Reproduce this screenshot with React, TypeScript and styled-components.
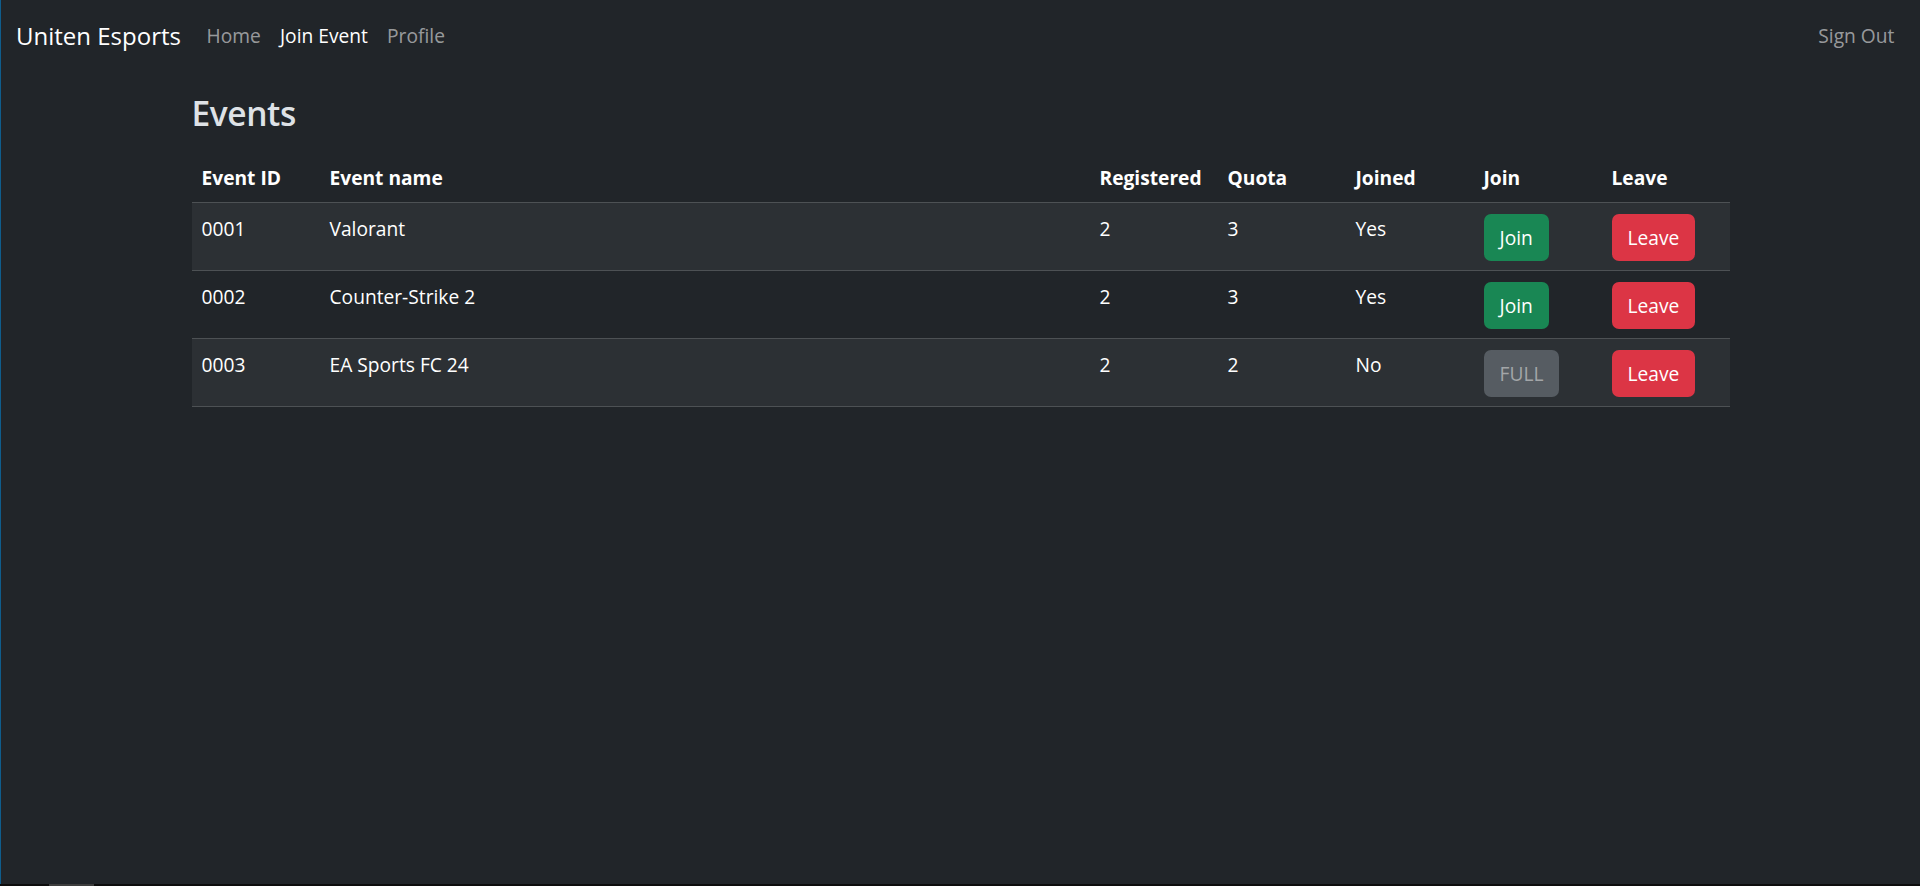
import styled, { createGlobalStyle } from "styled-components";

const GlobalStyle = createGlobalStyle`
  html, body {
    margin: 0;
    padding: 0;
    background: #212529;
  }
  body {
    font-family: "Open Sans", "Noto Sans", "Liberation Sans", sans-serif;
    color: #dee2e6;
    overflow: hidden;
  }
  * {
    box-sizing: border-box;
  }
`;

const Page = styled.div`
  min-height: 100vh;
  background: #212529;
  border-left: 1px solid #0f5d8c;
`;

const Navbar = styled.nav`
  height: 72px;
  display: flex;
  align-items: center;
  padding: 0 16px 0 15px;
`;

const Brand = styled.a`
  font-size: 24px;
  line-height: 36px;
  color: #fff;
  margin-right: 16px;
  text-decoration: none;
`;

const NavList = styled.div`
  display: flex;
  align-items: center;
  flex: 1;
`;

const NavLink = styled.a<{ $active?: boolean }>`
  font-size: 19.2px;
  line-height: 28.8px;
  padding: 0 9.6px;
  color: ${(p) => (p.$active ? "#ffffff" : "rgba(255, 255, 255, 0.55)")};
  text-decoration: none;
  cursor: pointer;
`;

const Spacer = styled.div`
  flex: 1;
`;

const Main = styled.main`
  width: 1538px;
  margin: 0 auto;
  padding-top: 18px;
`;

const Title = styled.h2`
  font-size: 33.5px;
  line-height: 46px;
  font-weight: 600;
  letter-spacing: -0.4px;
  color: #dee2e6;
  margin: 0 0 18px;
`;

const Table = styled.table`
  width: 100%;
  border-collapse: collapse;
  table-layout: fixed;
  color: #fff;
  font-size: 19.2px;
  line-height: 28.8px;
`;

const HeadCell = styled.th`
  text-align: left;
  font-weight: 700;
  padding: 9.6px 9.6px 9.6px 10px;
  border-bottom: 1px solid #4d5154;
`;

const Row = styled.tr<{ $striped?: boolean }>`
  background: ${(p) => (p.$striped ? "#2c3034" : "transparent")};
`;

const Cell = styled.td`
  vertical-align: top;
  padding: 12px 9.6px 8px 10px;
  border-bottom: 1px solid #4d5154;
  height: 68px;
`;

const ActionButton = styled.button<{ $variant: "join" | "leave" | "full" }>`
  display: inline-flex;
  align-items: center;
  justify-content: center;
  height: 47px;
  margin-top: -1px;
  padding: 0 16px;
  border-radius: 7px;
  border: none;
  font-family: inherit;
  font-size: 19.2px;
  cursor: ${(p) => (p.$variant === "full" ? "default" : "pointer")};
  color: ${(p) => (p.$variant === "full" ? "#a3a6a8" : "#ffffff")};
  background: ${(p) =>
    p.$variant === "join" ? "#198754" : p.$variant === "leave" ? "#dc3545" : "#565c62"};
`;

const ScrollTrack = styled.div`
  position: fixed;
  left: 0;
  right: 0;
  bottom: 0;
  height: 2px;
  background: #0d0d0d;
`;

const ScrollThumb = styled.div`
  margin-left: 49px;
  width: 45px;
  height: 100%;
  background: #3d3d3d;
`;

const events = [
  { id: "0001", name: "Valorant", registered: 2, quota: 3, joined: "Yes" },
  { id: "0002", name: "Counter-Strike 2", registered: 2, quota: 3, joined: "Yes" },
  { id: "0003", name: "EA Sports FC 24", registered: 2, quota: 2, joined: "No" },
];

const columns = [
  { label: "Event ID", width: 128 },
  { label: "Event name", width: undefined },
  { label: "Registered", width: 128 },
  { label: "Quota", width: 128 },
  { label: "Joined", width: 128 },
  { label: "Join", width: 128 },
  { label: "Leave", width: 128 },
];

export default function App() {
  return (
    <Page>
      <GlobalStyle />
      <Navbar>
        <Brand href="#">Uniten Esports</Brand>
        <NavList>
          <NavLink>Home</NavLink>
          <NavLink $active>Join Event</NavLink>
          <NavLink>Profile</NavLink>
          <Spacer />
          <NavLink>Sign Out</NavLink>
        </NavList>
      </Navbar>
      <Main>
        <Title>Events</Title>
        <Table>
          <colgroup>
            {columns.map((c) => (
              <col key={c.label} style={c.width ? { width: c.width } : undefined} />
            ))}
          </colgroup>
          <thead>
            <tr>
              {columns.map((c) => (
                <HeadCell key={c.label}>{c.label}</HeadCell>
              ))}
            </tr>
          </thead>
          <tbody>
            {events.map((e, i) => {
              const full = e.registered >= e.quota;
              return (
                <Row key={e.id} $striped={i % 2 === 0}>
                  <Cell>{e.id}</Cell>
                  <Cell>{e.name}</Cell>
                  <Cell>{e.registered}</Cell>
                  <Cell>{e.quota}</Cell>
                  <Cell>{e.joined}</Cell>
                  <Cell>
                    {full ? (
                      <ActionButton $variant="full" disabled>
                        FULL
                      </ActionButton>
                    ) : (
                      <ActionButton $variant="join">Join</ActionButton>
                    )}
                  </Cell>
                  <Cell>
                    <ActionButton $variant="leave">Leave</ActionButton>
                  </Cell>
                </Row>
              );
            })}
          </tbody>
        </Table>
      </Main>
      <ScrollTrack>
        <ScrollThumb />
      </ScrollTrack>
    </Page>
  );
}
